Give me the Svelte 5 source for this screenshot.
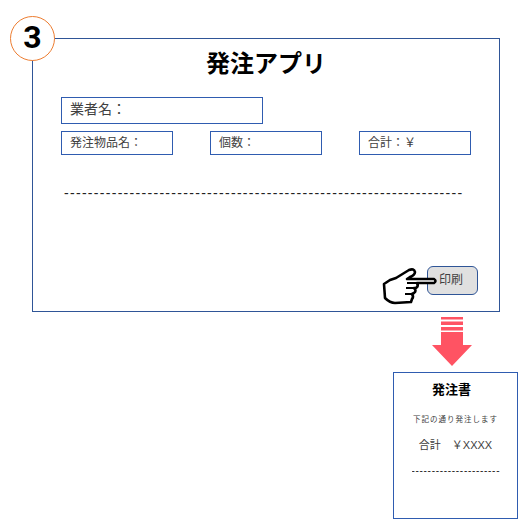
<script>
  const fields = [
    { label: "発注物品名：" },
    { label: "個数：" },
    { label: "合計：￥" }
  ];
</script>

<div class="page">
  <div class="badge">3</div>

  <section class="window">
    <h1>発注アプリ</h1>
    <div class="box name">業者名：</div>
    <div class="row">
      {#each fields as field}
        <div class="box field">{field.label}</div>
      {/each}
    </div>
    <div class="dashes">{"-".repeat(67)}</div>
    <div class="actions">
      <div class="print">印刷</div>
      <svg class="hand" width="56" height="38" viewBox="0 0 56 38">
        <path
          d="M2 17 L8 13 L14 11 L27 3 Q32 1 33 5 Q33 8 28 10 L25 12 L52 12 Q55 14 52 16 L35 16 Q37 19 34 21 L32 21 Q35 24 32 26 L30 27 Q32 30 30 32 L29 35 L13 36 Q8 36 3 31 Z"
          fill="#fff"
          stroke="#000"
          stroke-width="2.6"
          stroke-linejoin="round"
        />
        <path d="M25 16 H35 M24 21 H33 M23 27 H31" fill="none" stroke="#000" stroke-width="2.2" />
      </svg>
    </div>
  </section>

  <div class="lower">
    <svg class="arrow" width="40" height="49" viewBox="0 0 40 49">
      <rect x="9" y="0" width="22" height="2.5" fill="#ff5363" />
      <rect x="9" y="4.5" width="22" height="3.5" fill="#ff5363" />
      <rect x="9" y="10" width="22" height="3.5" fill="#ff5363" />
      <path d="M9 15 H31 V28 H40 L20 49 L0 28 H9 Z" fill="#ff5363" />
    </svg>
    <section class="doc">
      <h2>発注書</h2>
      <p class="note">下記の通り発注します</p>
      <p class="total">合計　￥XXXX</p>
      <div class="doc-dashes">{"-".repeat(22)}</div>
    </section>
  </div>
</div>

<style>
  :global(body) {
    margin: 0;
    background: #fff;
  }

  .page {
    position: relative;
    width: 525px;
    height: 531px;
    overflow: hidden;
    padding-top: 38px;
    box-sizing: border-box;
    font-family: "Noto Sans CJK JP", "Liberation Sans", sans-serif;
    color: #404040;
  }

  .badge {
    position: absolute;
    left: 10px;
    top: 16px;
    z-index: 1;
    box-sizing: border-box;
    width: 45px;
    height: 45px;
    padding-bottom: 3px;
    display: flex;
    align-items: center;
    justify-content: center;
    border: 1px solid #ed7d31;
    border-radius: 50%;
    background: #fff;
    color: #000;
    font-family: Roboto, "Liberation Sans", sans-serif;
    font-size: 32px;
    font-weight: 700;
    line-height: 1;
  }

  .window {
    box-sizing: border-box;
    width: 468px;
    height: 274px;
    margin-left: 32px;
    padding: 0 28px;
    border: 1px solid #2f5597;
    display: flex;
    flex-direction: column;
  }

  h1 {
    margin: 6px 0 0;
    height: 34px;
    color: #000;
    font-size: 24px;
    font-weight: 700;
    line-height: 34px;
    text-align: center;
  }

  .box {
    box-sizing: border-box;
    border: 1px solid #2f5cb0;
    color: #404040;
  }

  .name {
    width: 202px;
    height: 27px;
    margin-top: 18px;
    padding-left: 8px;
    font-size: 14px;
    line-height: 20px;
  }

  .row {
    display: flex;
    gap: 37px;
    margin-top: 7px;
  }

  .field {
    width: 112px;
    height: 24px;
    padding-left: 8px;
    font-size: 12px;
    line-height: 19px;
  }

  .dashes {
    margin: 26px 0 0 3px;
    height: 24px;
    color: #222;
    font-family: "Liberation Sans", sans-serif;
    font-size: 14px;
    line-height: 24px;
    letter-spacing: 1.3px;
    white-space: nowrap;
    overflow: hidden;
  }

  .actions {
    position: relative;
    display: flex;
    justify-content: flex-end;
    margin-top: 61px;
    margin-right: -7px;
  }

  .print {
    width: 51px;
    height: 29px;
    box-sizing: border-box;
    border: 1px solid #2f5597;
    border-radius: 6px;
    background: #e0e0e0;
    padding-left: 11px;
    font-size: 12px;
    line-height: 24px;
  }

  .hand {
    position: absolute;
    right: 40px;
    top: 1px;
  }

  .lower {
    display: flex;
    flex-direction: column;
    align-items: flex-end;
    margin-right: 7px;
    margin-top: 5px;
  }

  .arrow {
    margin-right: 46px;
  }

  .doc {
    box-sizing: border-box;
    width: 125px;
    height: 147px;
    margin-top: 6px;
    border: 1px solid #2f5cb0;
    display: flex;
    flex-direction: column;
    align-items: center;
    color: #404040;
  }

  h2 {
    margin: 7px 8px 0 0;
    color: #000;
    font-size: 13px;
    font-weight: 700;
    line-height: 18px;
  }

  .note {
    margin: 15px 0 0;
    font-size: 7.5px;
    letter-spacing: 1px;
    line-height: 12px;
  }

  .total {
    margin: 12px 0 0;
    font-family: "Liberation Sans", "Noto Sans CJK JP", sans-serif;
    font-size: 11px;
    line-height: 17px;
  }

  .doc-dashes {
    margin-top: 11px;
    width: 88px;
    overflow: hidden;
    color: #222;
    font-family: "Liberation Sans", sans-serif;
    font-size: 10px;
    letter-spacing: 0.7px;
    line-height: 12px;
    white-space: nowrap;
  }
</style>
